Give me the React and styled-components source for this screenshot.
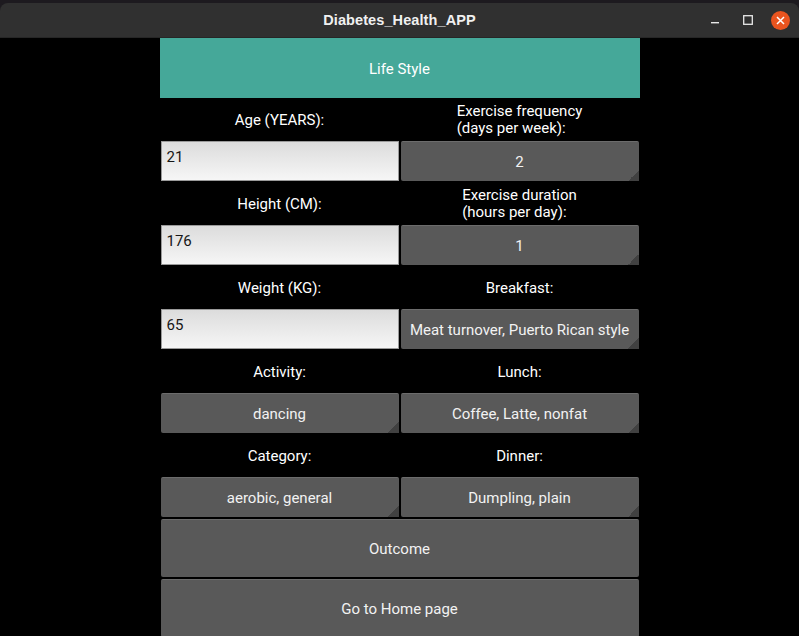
import React from "react";
import styled, { createGlobalStyle } from "styled-components";

const Global = createGlobalStyle`
  html, body { margin: 0; padding: 0; background: #000; overflow: hidden; }
  #root { width: 799px; height: 636px; }
`;

const Screen = styled.div`
  width: 799px;
  height: 636px;
  display: flex;
  flex-direction: column;
  background: #1d1a1f;
  overflow: hidden;
`;

const TitleBar = styled.div`
  margin-top: 3px;
  height: 35px;
  flex: none;
  background: #303030;
  border-radius: 8px 8px 0 0;
  display: flex;
  align-items: center;
  justify-content: center;
  position: relative;
  border-bottom: 1px solid #262626;
  box-sizing: border-box;
`;

const Title = styled.div`
  font-family: "Liberation Sans", "DejaVu Sans", sans-serif;
  font-weight: bold;
  font-size: 14.5px;
  color: #f0f0f0;
  letter-spacing: 0.1px;
`;

const Controls = styled.div`
  position: absolute;
  right: 2px;
  top: 0;
  bottom: 0;
  display: flex;
  align-items: center;
`;

const CtlBox = styled.div`
  width: 33px;
  height: 33px;
  display: flex;
  align-items: center;
  justify-content: center;
`;

const CloseDot = styled.div`
  width: 19px;
  height: 19px;
  border-radius: 50%;
  background: #e9541f;
  display: flex;
  align-items: center;
  justify-content: center;
`;

const Body = styled.div`
  flex: 1;
  background: #000;
  display: flex;
  justify-content: center;
`;

const Column = styled.div`
  width: 480px;
  display: flex;
  flex-direction: column;
  font-family: Roboto, "Noto Sans", sans-serif;
  font-size: 15px;
  color: #fff;
`;

const Header = styled.div`
  height: 60px;
  background: #45a899;
  display: flex;
  align-items: center;
  justify-content: center;
  padding-top: 1px;
  box-sizing: border-box;
  flex: none;
`;

const Grid = styled.div`
  display: grid;
  grid-template-columns: 240px 240px;
  grid-auto-rows: 42px;
`;

const Cell = styled.div`
  padding: 1px;
  box-sizing: border-box;
  display: flex;
`;

const LabelCell = styled.div`
  display: flex;
  align-items: center;
  justify-content: center;
  padding-top: 2px;
  box-sizing: border-box;
  color: #fff;
`;

const LabelText = styled.div`
  text-align: left;
  line-height: 17px;
`;

const Input = styled.div`
  flex: 1;
  box-sizing: border-box;
  border: 1px solid #9a9a9a;
  background: linear-gradient(#dcdcdc, #f6f6f6);
  color: #161616;
  padding: 7px 0 0 5px;
  line-height: 17px;
`;

const Btn = styled.div`
  flex: 1;
  box-sizing: border-box;
  background: #595959;
  border-top: 1px solid #6c6c6c;
  border-radius: 2px;
  color: #f2f2f2;
  display: flex;
  align-items: center;
  justify-content: center;
  padding-top: 1px;
  position: relative;
  white-space: nowrap;
  ${(p) =>
    p.$spinner &&
    `&::after {
      content: "";
      position: absolute;
      right: 0;
      bottom: 0;
      width: 11px;
      height: 11px;
      background: linear-gradient(135deg, transparent 50%, #414141 50%);
    }`}
`;

const Wide = styled.div`
  height: 60px;
  padding: 1px;
  box-sizing: border-box;
  display: flex;
  flex: none;
`;

const rows = [
  ["Age (YEARS):", ["Exercise frequency", "(days per week):"]],
  [{ input: "21" }, { spin: "2" }],
  ["Height (CM):", ["Exercise duration", "(hours per day):"]],
  [{ input: "176" }, { spin: "1" }],
  ["Weight (KG):", "Breakfast:"],
  [{ input: "65" }, { spin: "Meat turnover, Puerto Rican style" }],
  ["Activity:", "Lunch:"],
  [{ spin: "dancing" }, { spin: "Coffee, Latte, nonfat" }],
  ["Category:", "Dinner:"],
  [{ spin: "aerobic, general" }, { spin: "Dumpling, plain" }],
];

function renderItem(item, key) {
  if (typeof item === "string") {
    return (
      <LabelCell key={key}>
        <LabelText>{item}</LabelText>
      </LabelCell>
    );
  }
  if (Array.isArray(item)) {
    return (
      <LabelCell key={key}>
        <LabelText>
          {item[0]}
          <br />
          {item[1]}
        </LabelText>
      </LabelCell>
    );
  }
  if (item.input !== undefined) {
    return (
      <Cell key={key}>
        <Input>{item.input}</Input>
      </Cell>
    );
  }
  return (
    <Cell key={key}>
      <Btn $spinner>{item.spin}</Btn>
    </Cell>
  );
}

export default function App() {
  return (
    <>
      <Global />
      <Screen>
        <TitleBar>
          <Title>Diabetes_Health_APP</Title>
          <Controls>
            <CtlBox>
              <svg width="10" height="10" viewBox="0 0 10 10">
                <rect x="1" y="7" width="8" height="1.4" fill="#e8e8e8" />
              </svg>
            </CtlBox>
            <CtlBox>
              <svg width="10" height="10" viewBox="0 0 10 10">
                <rect x="0.7" y="0.7" width="8.6" height="8.6" fill="none" stroke="#e8e8e8" strokeWidth="1.3" />
              </svg>
            </CtlBox>
            <CtlBox>
              <CloseDot>
                <svg width="9" height="9" viewBox="0 0 9 9">
                  <path d="M1 1 L8 8 M8 1 L1 8" stroke="#fff" strokeWidth="1.5" />
                </svg>
              </CloseDot>
            </CtlBox>
          </Controls>
        </TitleBar>
        <Body>
          <Column>
            <Header>Life Style</Header>
            <Grid>{rows.flatMap((r, i) => r.map((it, j) => renderItem(it, `${i}-${j}`)))}</Grid>
            <Wide>
              <Btn>Outcome</Btn>
            </Wide>
            <Wide>
              <Btn>Go to Home page</Btn>
            </Wide>
          </Column>
        </Body>
      </Screen>
    </>
  );
}
